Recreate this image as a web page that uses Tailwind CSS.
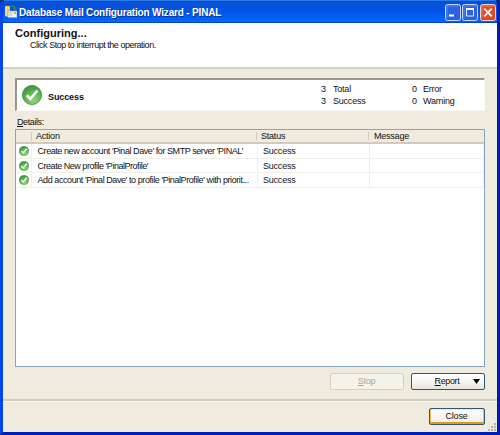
<!DOCTYPE html>
<html lang="en"><head><meta charset="utf-8"><title>Database Mail Configuration Wizard</title>
<script src="https://cdn.jsdelivr.net/npm/@tailwindcss/browser@4"></script></head>
<body class="w-[500px] h-[435px] overflow-hidden bg-[#0a2f70] font-['Liberation_Sans',Arial,sans-serif] text-[9px] leading-[12px] tracking-[-0.22px] text-[#111] whitespace-nowrap">
<svg class="absolute w-0 h-0"><defs>
<radialGradient id="g" cx=".6" cy=".8" r=".8"><stop stop-color="#8fd474"/><stop offset=".6" stop-color="#5bb352"/><stop offset="1" stop-color="#418f42"/></radialGradient>
<symbol id="ok" viewBox="0 0 20 20"><circle cx="10" cy="10" r="9.6" fill="url(#g)" stroke="#438a40" stroke-width=".8"/><path d="M4.8 10.4 8.3 14 15.4 5.6" fill="none" stroke="#fff" stroke-width="2.7"/></symbol>
</defs></svg>
<div class="w-[500px] h-[435px] flex flex-col border-x-[3px] border-b-[3px] border-l-[#0646e8] border-r-[#001dac] border-b-[#001fb4] rounded-t-[5px] overflow-hidden">
<header class="h-[23px] shrink-0 -mx-[3px] pl-[5px] pr-[4px] flex items-center bg-linear-to-b from-[#0a50d0] via-[#0055e8] to-[#0567ff] border-t border-t-[#2a7bea] border-b border-b-[#0044d0]">
<svg class="w-[12px] h-[13px]" viewBox="0 0 12 13"><path d="M0 1.5Q2.5 0 5 1.5V11Q2.5 12.5 0 11Z" fill="#f0c75a"/><path d="M1 2v8.5" stroke="#fff0b0"/><path d="M6 1.5Q9 0 10 3.5M8 2.5l2 2 1.5-2" fill="none" stroke="#258c36" stroke-width="1.4"/><path d="M3 6h9v6.5H3z" fill="#f3f1e8" stroke="#9aa3b8" stroke-width=".6"/><path d="M4 8h4M4 10h3" stroke="#9ba8bd" stroke-width=".7"/><path d="M9.3 7h1.7v2H9.3z" fill="#d5a052"/></svg>
<span class="ml-[2px] mt-[3px] text-[10px] font-bold tracking-[-0.17px] text-white [text-shadow:1px_1px_0_#0b2e8a]">Database Mail Configuration Wizard - PINAL</span>
<div class="ml-auto mt-[2px] flex gap-px">
<svg class="w-[16px] h-[17px]" viewBox="0 0 16 17"><rect x=".5" y=".5" width="15" height="16" rx="2" fill="#2b62e2" stroke="#c4d7f8"/><path d="M2 14V2h12" fill="none" stroke="#5a8cf0"/><path d="M4 11.5h5" stroke="#fff" stroke-width="2"/></svg>
<svg class="w-[16px] h-[17px]" viewBox="0 0 16 17"><rect x=".5" y=".5" width="15" height="16" rx="2" fill="#2b62e2" stroke="#c4d7f8"/><path d="M2 14V2h12" fill="none" stroke="#5a8cf0"/><path d="M4.5 5v7h7V5M4 5h8" fill="none" stroke="#e4edff"/><path d="M4 5h8" stroke="#fff" stroke-width="2"/></svg>
<svg class="ml-px w-[16px] h-[17px]" viewBox="0 0 16 17"><rect x=".5" y=".5" width="15" height="16" rx="2" fill="#df4a22" stroke="#f3d3cf"/><path d="M2 14V2h12" fill="none" stroke="#ee8663"/><path d="m4.3 4.7 7.4 7.6m0-7.6-7.4 7.6" stroke="#fff" stroke-width="1.9"/></svg>
</div></header>
<main class="flex-1 min-h-0 bg-[#efebde] flex flex-col">
<section class="h-[46px] shrink-0 bg-white border-b-2 border-b-[#d2cfc3] pl-[12px] pt-[4px]">
<h1 class="text-[11px] leading-[13px] font-bold tracking-[0.02px]">Configuring...</h1>
<p class="pl-[15px] leading-[10px] tracking-[-0.47px]">Click Stop to interrupt the operation.</p></section>
<section class="mt-[9px] ml-[12px] mr-[12px] h-[33px] shrink-0 bg-white border-t-2 border-l-2 border-t-[#989589] border-l-[#989589] border-b border-r border-b-[#fbfaf5] border-r-[#fbfaf5] flex items-center">
<svg class="w-[20px] h-[20px] ml-[5px]"><use href="#ok"/></svg>
<b class="ml-[6px] mt-[4px] tracking-[-0.1px]">Success</b>
<div class="ml-auto w-[163px] grid grid-cols-[12px_79px_11px_1fr] leading-[12px]"><span>3</span><span>Total</span><span>0</span><span>Error</span><span>3</span><span>Success</span><span>0</span><span>Warning</span></div>
</section>
<p class="mt-[5px] ml-[14px] h-[13px] shrink-0 tracking-[-0.4px]"><span class="underline">D</span>etails:</p>
<section class="ml-[12px] w-[470px] h-[238px] shrink-0 border border-[#86a5c4] bg-white">
<div class="h-[14px] bg-[#efebde] border-b-2 border-b-[#d3c9bd] grid grid-cols-[16px_224px_112px_1fr] leading-[13px]"><span class="border-r border-[#d0ccbd] my-[2px]"></span><span class="pl-[4px]">Action</span><span class="pl-[5px] relative before:content-[''] before:absolute before:left-0 before:top-[2px] before:h-[8px] before:w-px before:bg-[#d0ccbd]">Status</span><span class="pl-[6px] relative before:content-[''] before:absolute before:left-0 before:top-[2px] before:h-[8px] before:w-px before:bg-[#d0ccbd]">Message</span></div>
<div class="grid grid-cols-[16px_226px_112px_1fr] auto-rows-[14.5px] leading-[14px] *:border-b *:border-r *:border-[#f2efe6]">
<i><svg class="w-[10px] h-[10px] ml-[3px] mt-[2px]"><use href="#ok"/></svg></i><span class="pl-[5.5px] tracking-[-0.43px]">Create new account 'Pinal Dave' for SMTP server 'PINAL'</span><span class="pl-[5px]">Success</span><span></span>
<i><svg class="w-[10px] h-[10px] ml-[3px] mt-[2px]"><use href="#ok"/></svg></i><span class="pl-[5.5px] tracking-[-0.47px]">Create New profile 'PinalProfile'</span><span class="pl-[5px]">Success</span><span></span>
<i><svg class="w-[10px] h-[10px] ml-[3px] mt-[2px]"><use href="#ok"/></svg></i><span class="pl-[5.5px] tracking-[-0.42px]">Add account 'Pinal Dave' to profile 'PinalProfile' with priorit...</span><span class="pl-[5px]">Success</span><span></span>
</div></section>
<div class="mt-[6px] mr-[12.5px] h-[17px] shrink-0 flex justify-end gap-[7px]">
<button class="w-[74px] border border-[#d2cfbf] bg-[#f5f3e9] text-[#aaa797] rounded-[2px] leading-[15px]"><span class="underline">S</span>top</button>
<button class="w-[74px] border border-[#315878] bg-linear-to-b from-white via-[#f7f6f2] to-[#e6e3dc] rounded-[2px] leading-[15px] flex items-center pl-[23px] tracking-[-0.35px]"><span class="underline">R</span>eport<svg class="ml-auto mr-[4px] w-[7px] h-[5px]" viewBox="0 0 7 5"><path d="M0 0h7L3.5 5z"/></svg></button></div>
<div class="mt-[9px] h-[3px] shrink-0 border-t-2 border-t-[#cfccbf] border-b border-b-[#faf9f3]"></div>
<footer class="flex-1 flex justify-end pr-[12.5px] pt-[6px] relative">
<button class="w-[56px] h-[17px] border border-[#315878] rounded-[2px] bg-linear-to-b from-white to-[#f0ede8] [box-shadow:inset_0_-2px_0_#e59b16,inset_1px_0_0_#f6bd55,inset_-1px_0_0_#f6bd55,inset_0_1px_0_#fce5b0] leading-[15px]">Close</button>
<svg class="absolute right-0 bottom-0 w-[9px] h-[9px]" fill="#b8b4a3"><path d="M6 0h2v2H6zM3 3h2v2H3zM6 3h2v2H6zM0 6h2v2H0zM3 6h2v2H3zM6 6h2v2H6z"/></svg>
</footer></main></div>
</body></html>
